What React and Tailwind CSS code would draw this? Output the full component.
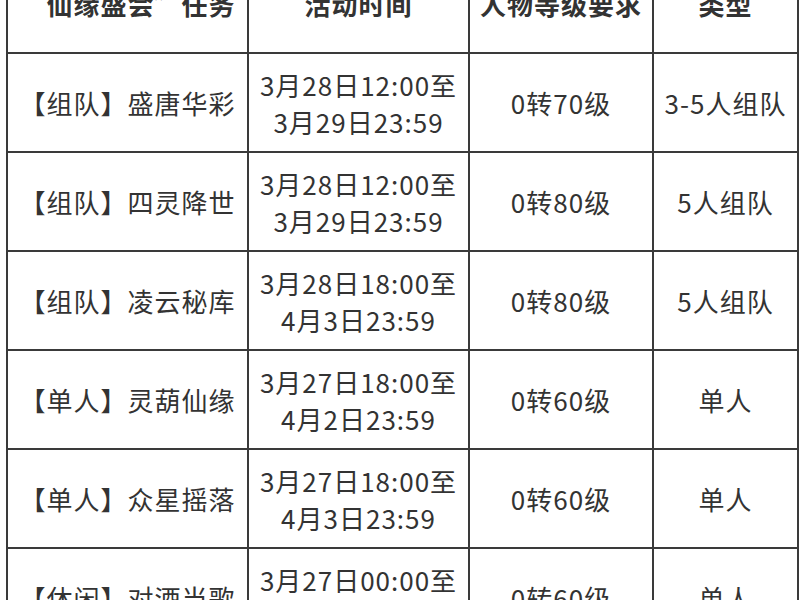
const rows = [
  { task: "【组队】盛唐华彩", start: "3月28日12:00至", end: "3月29日23:59", level: "0转70级", type: "3-5人组队" },
  { task: "【组队】四灵降世", start: "3月28日12:00至", end: "3月29日23:59", level: "0转80级", type: "5人组队" },
  { task: "【组队】凌云秘库", start: "3月28日18:00至", end: "4月3日23:59", level: "0转80级", type: "5人组队" },
  { task: "【单人】灵葫仙缘", start: "3月27日18:00至", end: "4月2日23:59", level: "0转60级", type: "单人" },
  { task: "【单人】众星摇落", start: "3月27日18:00至", end: "4月3日23:59", level: "0转60级", type: "单人" },
  { task: "【休闲】对酒当歌", start: "3月27日00:00至", end: "3月29日23:59", level: "0转60级", type: "单人" },
]

export default function App() {
  return (
    <div className="w-[800px] h-[600px] overflow-hidden bg-white font-['Noto_Sans_CJK_SC','Noto_Sans',sans-serif] text-[#333]">
      {/* header row sits partly above the visible area, as in the crop */}
      <table className="mt-[-47px] ml-[6px] w-[791px] table-fixed border-collapse text-[26px] tracking-[1px]">
        <colgroup>
          <col className="w-[241px]" />
          <col className="w-[221px]" />
          <col className="w-[184px]" />
          <col className="w-[145px]" />
        </colgroup>
        <thead>
          <tr className="h-[99px]">
            <th className="border-2 border-[#3a3a3a] font-bold">“仙缘盛会”任务</th>
            <th className="border-2 border-[#3a3a3a] font-bold">活动时间</th>
            <th className="border-2 border-[#3a3a3a] font-bold">人物等级要求</th>
            <th className="border-2 border-[#3a3a3a] font-bold">类型</th>
          </tr>
        </thead>
        <tbody>
          {rows.map((r) => (
            <tr key={r.task} className="h-[99px]">
              <td className="border-2 border-[#3a3a3a] text-center">{r.task}</td>
              <td className="border-2 border-[#3a3a3a] text-center leading-[37px]">
                {r.start}
                <br />
                {r.end}
              </td>
              <td className="border-2 border-[#3a3a3a] text-center">{r.level}</td>
              <td className="border-2 border-[#3a3a3a] text-center">{r.type}</td>
            </tr>
          ))}
        </tbody>
      </table>
    </div>
  )
}
